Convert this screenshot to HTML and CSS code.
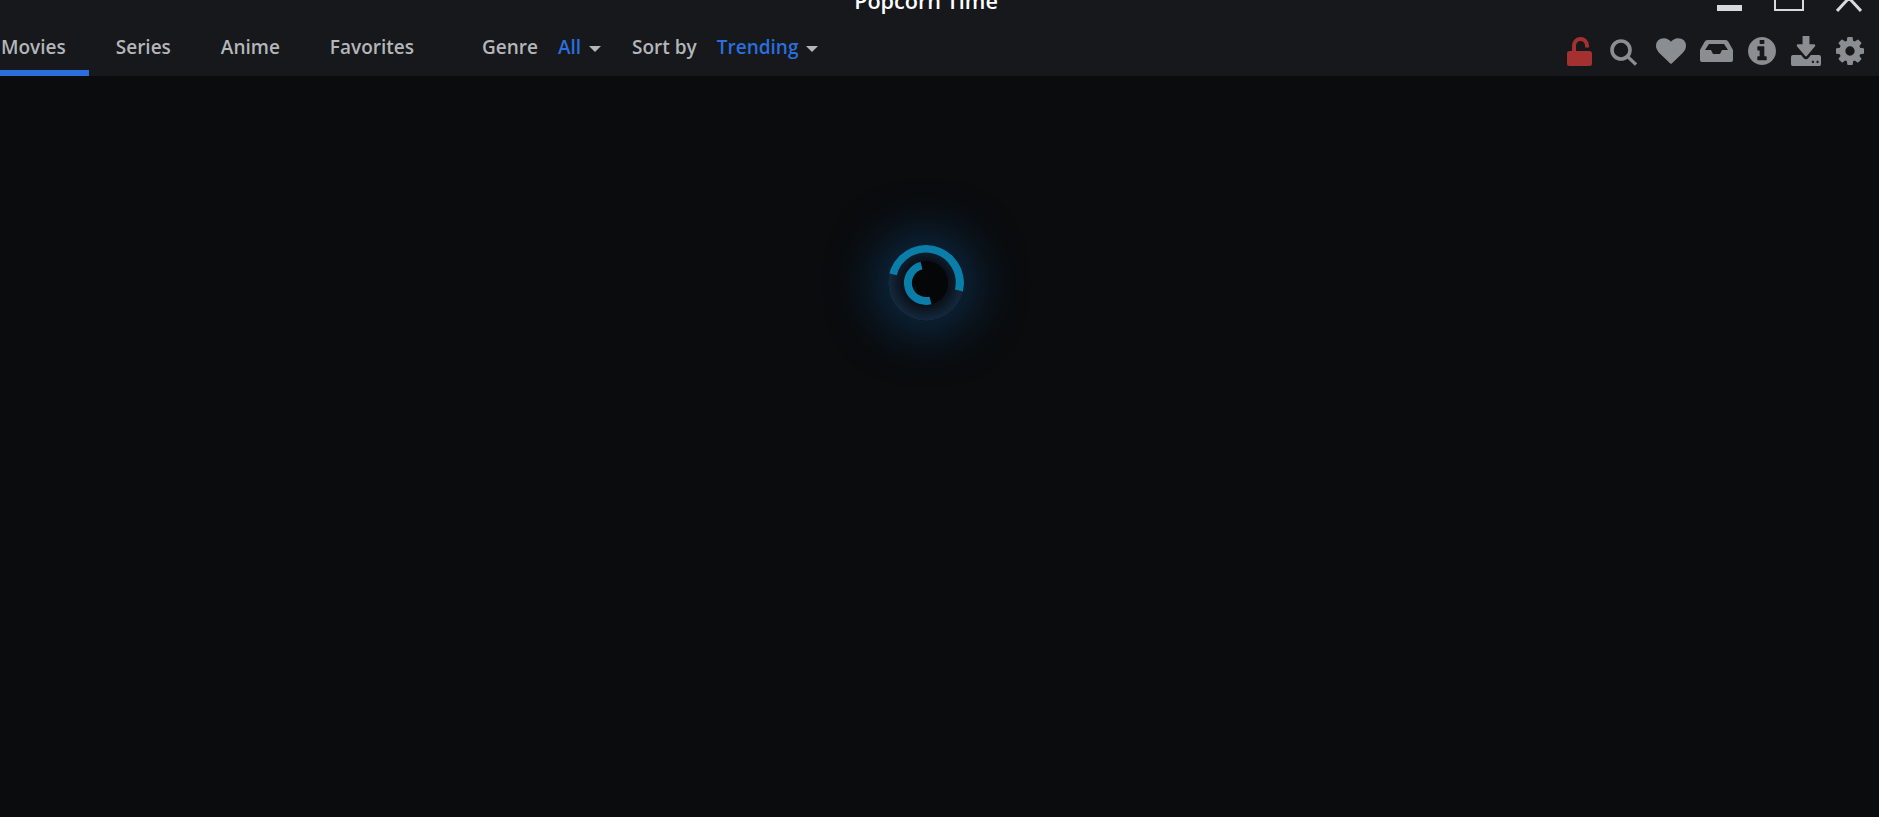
FILE: index.html
```html
<!DOCTYPE html>
<html>
<head>
    <title>Popcorn Time</title>
    <link rel="stylesheet" href="styles.css">
</head>
<body>
    <header class="app-header">
        <div class="title-bar">
            <div class="title-spacer"></div>
            <div class="window-title">Popcorn Time</div>
            <div class="window-controls">
                <span class="win-min"></span>
                <span class="win-max"></span>
                <svg class="win-close" viewBox="0 0 26 12"><path d="M1 11 13 -2 25 11" fill="none" stroke="#d8d9da" stroke-width="3"/></svg>
            </div>
        </div>
        <nav class="nav-bar">
            <ul class="tabs">
                <li class="tab active">Movies</li>
                <li class="tab">Series</li>
                <li class="tab">Anime</li>
                <li class="tab">Favorites</li>
            </ul>
            <div class="filter filter-genre">
                <span class="filter-label">Genre</span>
                <span class="filter-value">All</span>
                <span class="caret"></span>
            </div>
            <div class="filter filter-sort">
                <span class="filter-label">Sort by</span>
                <span class="filter-value">Trending</span>
                <span class="caret"></span>
            </div>
            <div class="toolbar">
                <svg class="icon icon-lock" viewBox="0 0 25 29"><rect x="0" y="14" width="25" height="15" rx="2.5" fill="#a53030"/><path d="M7 15V8.500A6.500 6.500 0 0 1 20 8.500V10.500" fill="none" stroke="#a53030" stroke-width="4"/></svg>
                <svg class="icon icon-search" viewBox="0 0 27 27"><circle cx="11" cy="11" r="9" fill="none" stroke="#8a8d91" stroke-width="3.6"/><path d="M17.500 17.500 26 25.500" stroke="#8a8d91" stroke-width="3.200"/></svg>
                <svg class="icon icon-heart" viewBox="0 128 1792 1536"><path fill="#8a8d91" d="M896 1664q-26 0-44-18l-624-602q-10-8-27.500-26t-55.500-65.500-68-97.500-53.500-121-23.500-138q0-220 127-344t351-124q62 0 126.500 21.500t120 58 95.500 68.500 76 68q36-36 76-68t95.500-68.500 120-58 126.500-21.500q224 0 351 124t127 344q0 221-229 450l-623 600q-18 18-44 18z"/></svg>
                <svg class="icon icon-inbox" viewBox="0 0 33 22"><path fill="#8a8d91" fill-rule="evenodd" d="M7.500 0H25.500Q27.500 0 28.500 2L33 10V20Q33 22 31 22H2Q0 22 0 20V10L4.500 2Q5.500 0 7.500 0ZM9 4H24L28 10H22L20 14H13L11 10H5Z"/></svg>
                <svg class="icon icon-info" viewBox="128 128 1536 1536"><path fill="#8a8d91" d="M1152 1376v-160q0-14-9-23t-23-9h-96v-512q0-14-9-23t-23-9h-320q-14 0-23 9t-9 23v160q0 14 9 23t23 9h96v320h-96q-14 0-23 9t-9 23v160q0 14 9 23t23 9h448q14 0 23-9t9-23zm-128-896v-160q0-14-9-23t-23-9h-192q-14 0-23 9t-9 23v160q0 14 9 23t23 9h192q14 0 23-9t9-23zm640 416q0 209-103 385.500t-279.500 279.500-385.500 103-385.500-103-279.500-279.500-103-385.500 103-385.500 279.500-279.500 385.500-103 385.500 103 279.500 279.500 103 385.500z"/></svg>
                <svg class="icon icon-download" viewBox="64 128 1664 1408" preserveAspectRatio="none"><path fill="#8a8d91" d="M1344 1344q0-26-19-45t-45-19-45 19-19 45 19 45 45 19 45-19 19-45zm256 0q0-26-19-45t-45-19-45 19-19 45 19 45 45 19 45-19 19-45zm128-224v320q0 40-28 68t-68 28h-1472q-40 0-68-28t-28-68v-320q0-40 28-68t68-28h465l135 136q58 56 136 56t136-56l136-136h464q40 0 68 28t28 68zm-325-569q17 41-14 70l-448 448q-18 19-45 19t-45-19l-448-448q-31-29-14-70 17-39 59-39h256v-448q0-26 19-45t45-19h256q26 0 45 19t19 45v448h256q42 0 59 39z"/></svg>
                <svg class="icon icon-gear" viewBox="128 128 1536 1536"><path fill="#8a8d91" d="M1152 896q0-106-75-181t-181-75-181 75-75 181 75 181 181 75 181-75 75-181zm512-109v222q0 12-8 23t-20 13l-185 28q-19 54-39 91 35 50 107 138 10 12 10 25t-9 23q-27 37-99 108t-94 71q-12 0-26-9l-138-108q-44 23-91 38-16 136-29 186-7 28-36 28h-222q-14 0-24.500-8.500t-11.500-21.500l-28-184q-49-16-90-37l-141 107q-10 9-25 9-14 0-25-11-126-114-165-168-7-10-7-23 0-12 8-23 15-21 51-66.500t54-70.500q-27-50-41-99l-183-27q-13-2-21-12.500t-8-23.500v-222q0-12 8-23t19-13l186-28q14-46 39-92-40-57-107-138-10-12-10-24 0-10 9-23 26-36 98.500-107.500t94.500-71.500q13 0 26 10l138 107q44-23 91-38 16-136 29-186 7-28 36-28h222q14 0 24.500 8.500t11.500 21.500l28 184q49 16 90 37l142-107q9-9 24-9 13 0 25 10 129 119 165 170 7 8 7 22 0 12-8 23-15 21-51 66.500t-54 70.500q26 50 41 98l183 28q13 2 21 12.500t8 23.500z"/></svg>
            </div>
        </nav>
    </header>
    <main class="content">
        <svg class="spinner" viewBox="0 0 76 76">
            <defs>
                <radialGradient id="ring-fill">
                    <stop offset="58%" stop-color="#0a1018"/>
                    <stop offset="100%" stop-color="#142a3f"/>
                </radialGradient>
            </defs>
            <circle cx="38" cy="38" r="38" fill="url(#ring-fill)"/>
            <circle cx="38" cy="38" r="22" fill="#050608"/>
            <!-- outer arc, left to right over the top -->
            <path d="M4.700 29.300A34 34 0 0 1 71 45.500" fill="none" stroke="#0a7ea8" stroke-width="8.500"/>
            <!-- inner arc, top to bottom round the left -->
            <path d="M33.500 20.500A18 18 0 0 0 42.500 55.500" fill="none" stroke="#0a7ea8" stroke-width="8"/>
        </svg>
    </main>
</body>
</html>
```

FILE: styles.css
```css
* {
    box-sizing: border-box;
}

html, body {
    height: 100%;
}

body {
    margin: 0;
    background: #0a0c0e;
    font-family: "Open Sans", "Noto Sans", sans-serif;
    overflow: hidden;
}

.app-header {
    background: #16181c;
    height: 76px;
}

/* title bar is cut off by the top of the window */
.title-bar {
    display: grid;
    grid-template-columns: 1fr auto 1fr;
    grid-template-rows: 14px;
    height: 14px;
    overflow: hidden;
}

.window-title {
    align-self: end;
    color: #fff;
    font-size: 21.6px;
    font-weight: 600;
    line-height: 28px;
    margin-right: 27px;
    margin-bottom: -1px;
}

.window-controls {
    display: flex;
    justify-content: flex-end;
    align-items: flex-end;
    gap: 32px;
    padding-right: 17px;
}

.win-min {
    width: 25px;
    height: 6px;
    background: #d8d9da;
    margin-bottom: 3px;
}

.win-max {
    width: 30px;
    height: 20px;
    border: 2px solid #d8d9da;
    margin-bottom: 3px;
}

.win-close {
    width: 26px;
    height: 12px;
    margin-bottom: 2px;
}

.nav-bar {
    display: flex;
    align-items: stretch;
    height: 62px;
    font-size: 19px;
    font-weight: 600;
    line-height: 26px;
}

.tabs {
    display: flex;
    list-style: none;
    margin: 0;
    padding: 0;
}

.tab {
    color: #b4b6b9;
    padding: 20px 23px 0 1px;
    margin-right: 26px;
}

.tab.active {
    border-bottom: 6px solid #2a6fdb;
}

.filter {
    display: flex;
    align-items: center;
    align-self: flex-start;
    padding-top: 20px;
}

.filter-genre {
    margin-left: 19px;
}

.filter-sort {
    margin-left: 31px;
}

.filter-label {
    color: #b4b6b9;
    margin-right: 20px;
}

.filter-value {
    color: #2a6fdb;
    margin-right: 8px;
}

.caret {
    border-top: 6px solid #b4b6b9;
    border-left: 6px solid transparent;
    border-right: 6px solid transparent;
    margin-top: 4px;
}

.toolbar {
    display: flex;
    align-items: center;
    margin-left: auto;
    padding: 12px 15px 0 0;
}

.icon {
    display: block;
}

.icon-lock { width: 25px; height: 29px; margin-right: 18px; }
.icon-search { width: 27px; height: 27px; margin-right: 19px; margin-top: 2px; }
.icon-heart { width: 30px; height: 26px; margin-right: 14px; }
.icon-inbox { width: 33px; height: 22px; margin-right: 15px; }
.icon-info { width: 28px; height: 28px; margin-right: 15px; }
.icon-download { width: 30px; height: 30px; margin-right: 15px; }
.icon-gear { width: 28px; height: 28px; }

/* spinner sits a bit left of the window centre, same as the title */
.content {
    display: flex;
    justify-content: center;
    padding: 169px 27px 0 0;
}

.spinner {
    width: 76px;
    height: 76px;
    border-radius: 50%;
    box-shadow: 0 0 50px 10px rgba(14, 70, 120, 0.6);
}
```
